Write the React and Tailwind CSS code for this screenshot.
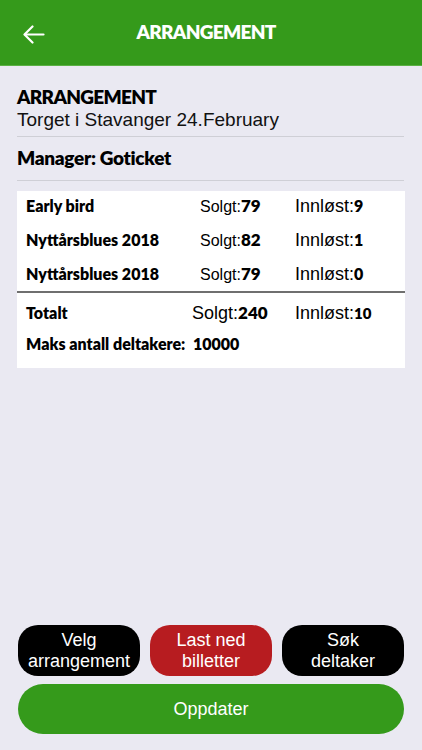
import React from "react";

const bold = { fontFamily: "Lato, 'Open Sans', sans-serif" };

function Row({ name, solgt, innlost, big }) {
  return (
    <div className="flex items-center h-[34px] pb-[4px]">
      <div className={big ? "w-[166px] text-[16px] font-extrabold text-black" : "w-[174px] text-[16px] font-extrabold text-black"} style={bold}>{name}</div>
      <div className={big ? "w-[103px] text-[18px] text-black" : "w-[95px] text-[16px] text-black"}>
        Solgt:<span className="text-[17px] font-extrabold" style={bold}>{solgt}</span>
      </div>
      <div className="text-[18px] text-black">
        Innløst:<span className={big ? "text-[15px] font-extrabold" : "text-[16px] font-extrabold"} style={bold}>{innlost}</span>
      </div>
    </div>
  );
}

export default function App() {
  return (
    <div
      className="w-[422px] h-[750px] bg-[#eae9f2] flex flex-col overflow-hidden"
      style={{ fontFamily: "'Liberation Sans', Arial, sans-serif" }}
    >
      <div className="h-[66px] bg-[#359a1b] flex items-center relative border-b border-[#5bb044]">
        <svg className="absolute left-[23px] top-[25px]" width="22" height="19" viewBox="0 0 22 19" fill="none" stroke="white" strokeWidth="2.2" strokeLinecap="round" strokeLinejoin="round">
          <path d="M20.5 9.5H2" />
          <path d="M9.5 1.5L1.5 9.5l8 8" />
        </svg>
        <div className="w-full text-center pr-[10px] text-white text-[19px] font-extrabold tracking-[-0.7px]" style={bold}>ARRANGEMENT</div>
      </div>

      <div className="px-[17px] pt-[19px]">
        <div className="text-[19px] font-extrabold leading-[24px] text-black tracking-[-0.7px]" style={bold}>ARRANGEMENT</div>
        <div className="text-[19px] leading-[22px] text-[#111] pb-[5px]">Torget i Stavanger 24.February</div>
        <div className="h-px bg-[#cfcfd6] mr-[1px]" />
        <div className="text-[19px] font-extrabold leading-[24px] text-black pt-[9px] pb-[10px] tracking-[-0.3px]" style={bold}>Manager: Goticket</div>
        <div className="h-px bg-[#cfcfd6] mr-[1px]" />
      </div>

      <div className="mx-[17px] mt-[10px] bg-white h-[177px]">
        <div className="px-[9px]">
          <Row name="Early bird" solgt="79" innlost="9" />
          <Row name="Nyttårsblues 2018" solgt="82" innlost="1" />
          <Row name="Nyttårsblues 2018" solgt="79" innlost="0" />
        </div>
        <div className="h-[2px] bg-[#6f6f6f] -mt-[2px]" />
        <div className="px-[9px] pt-[5px]">
          <Row name="Totalt" solgt="240" innlost="10" big />
          <div className="flex items-center h-[24px] text-[16px] font-extrabold text-black" style={bold}>
            <span className="w-[167px]">Maks antall deltakere:</span>
            <span>10000</span>
          </div>
        </div>
      </div>

      <div className="flex-1" />

      <div className="px-[18px] pb-[16px] flex flex-col gap-[8px]">
        <div className="flex gap-[10px]">
          <div className="flex-1 h-[51px] rounded-[20px] bg-black text-white text-[18px] leading-[21px] flex items-center justify-center text-center">
            Velg<br />arrangement
          </div>
          <div className="flex-1 h-[51px] rounded-[20px] bg-[#b71c20] text-white text-[18px] leading-[21px] flex items-center justify-center text-center">
            Last ned<br />billetter
          </div>
          <div className="flex-1 h-[51px] rounded-[20px] bg-black text-white text-[18px] leading-[21px] flex items-center justify-center text-center">
            Søk<br />deltaker
          </div>
        </div>
        <div className="h-[50px] rounded-[25px] bg-[#359a1b] text-white text-[18px] flex items-center justify-center">
          Oppdater
        </div>
      </div>
    </div>
  );
}
